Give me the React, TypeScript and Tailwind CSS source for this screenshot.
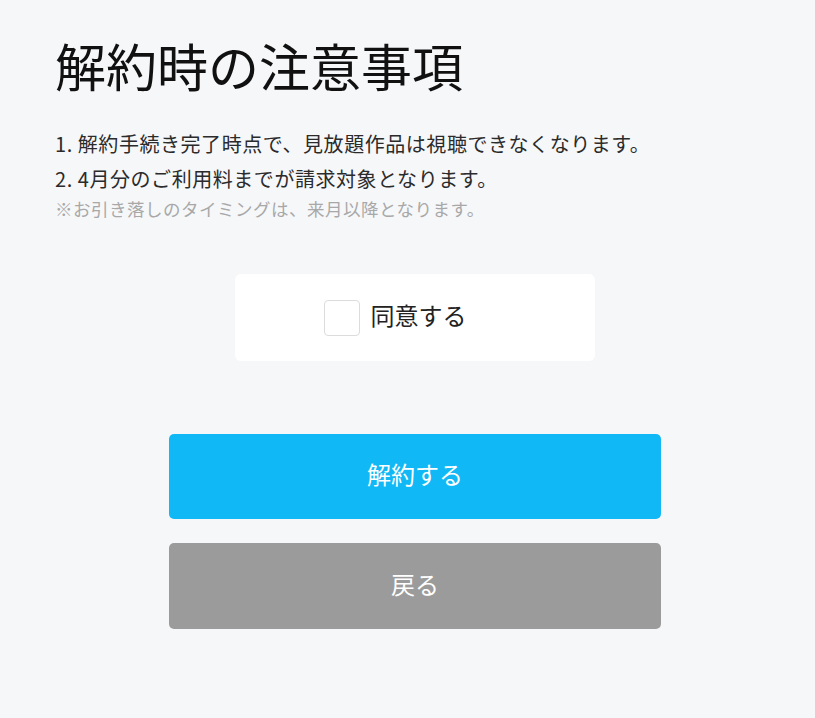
import { useState } from "react";

export default function App() {
  const [agreed, setAgreed] = useState(false);

  return (
    <div
      className="min-h-[718px] w-full bg-[#f6f7f9] text-[#1f1f1f]"
      style={{ fontFamily: '"Noto Sans CJK JP", "Noto Sans", sans-serif' }}
    >
      <div className="ml-[55px] w-[720px] pt-[30px]">
        <h1 className="text-[51px] leading-[70px] font-normal text-[#111]">解約時の注意事項</h1>

        <div className="mt-[26px] text-[20px] leading-[35px] tracking-[0.55px] text-[#2b2b2b]">
          <p>1. 解約手続き完了時点で、見放題作品は視聴できなくなります。</p>
          <p>2. 4月分のご利用料までが請求対象となります。</p>
        </div>
        <p className="text-[17.5px] leading-[26px] tracking-[0.5px] text-[#a8a8a8]">
          ※お引き落しのタイミングは、来月以降となります。
        </p>

        <div className="mt-[52px] flex justify-center">
          <label className="flex h-[87px] w-[360px] cursor-pointer items-center justify-center gap-[11px] rounded-[6px] bg-white pr-[40px]">
            <span
              onClick={() => setAgreed(!agreed)}
              className="flex h-[36px] w-[36px] items-center justify-center rounded-[4px] border border-[#dcdcdc] bg-white"
            >
              {agreed && (
                <svg viewBox="0 0 24 24" className="h-5 w-5 text-[#10b8f5]" fill="none" stroke="currentColor" strokeWidth="3">
                  <path d="M5 12l5 5 9-10" />
                </svg>
              )}
            </span>
            <span className="-mt-[5px] text-[24px] text-[#222]">同意する</span>
          </label>
        </div>

        <div className="mt-[73px] flex flex-col items-center gap-[24px]">
          <button className="flex h-[85px] w-[492px] items-center justify-center rounded-[5px] bg-[#10b8f5] pb-[5px] text-[24px] text-white">
            解約する
          </button>
          <button className="flex h-[86px] w-[492px] items-center justify-center rounded-[5px] bg-[#9b9b9b] pb-[5px] text-[24px] text-white">
            戻る
          </button>
        </div>
      </div>
    </div>
  );
}
